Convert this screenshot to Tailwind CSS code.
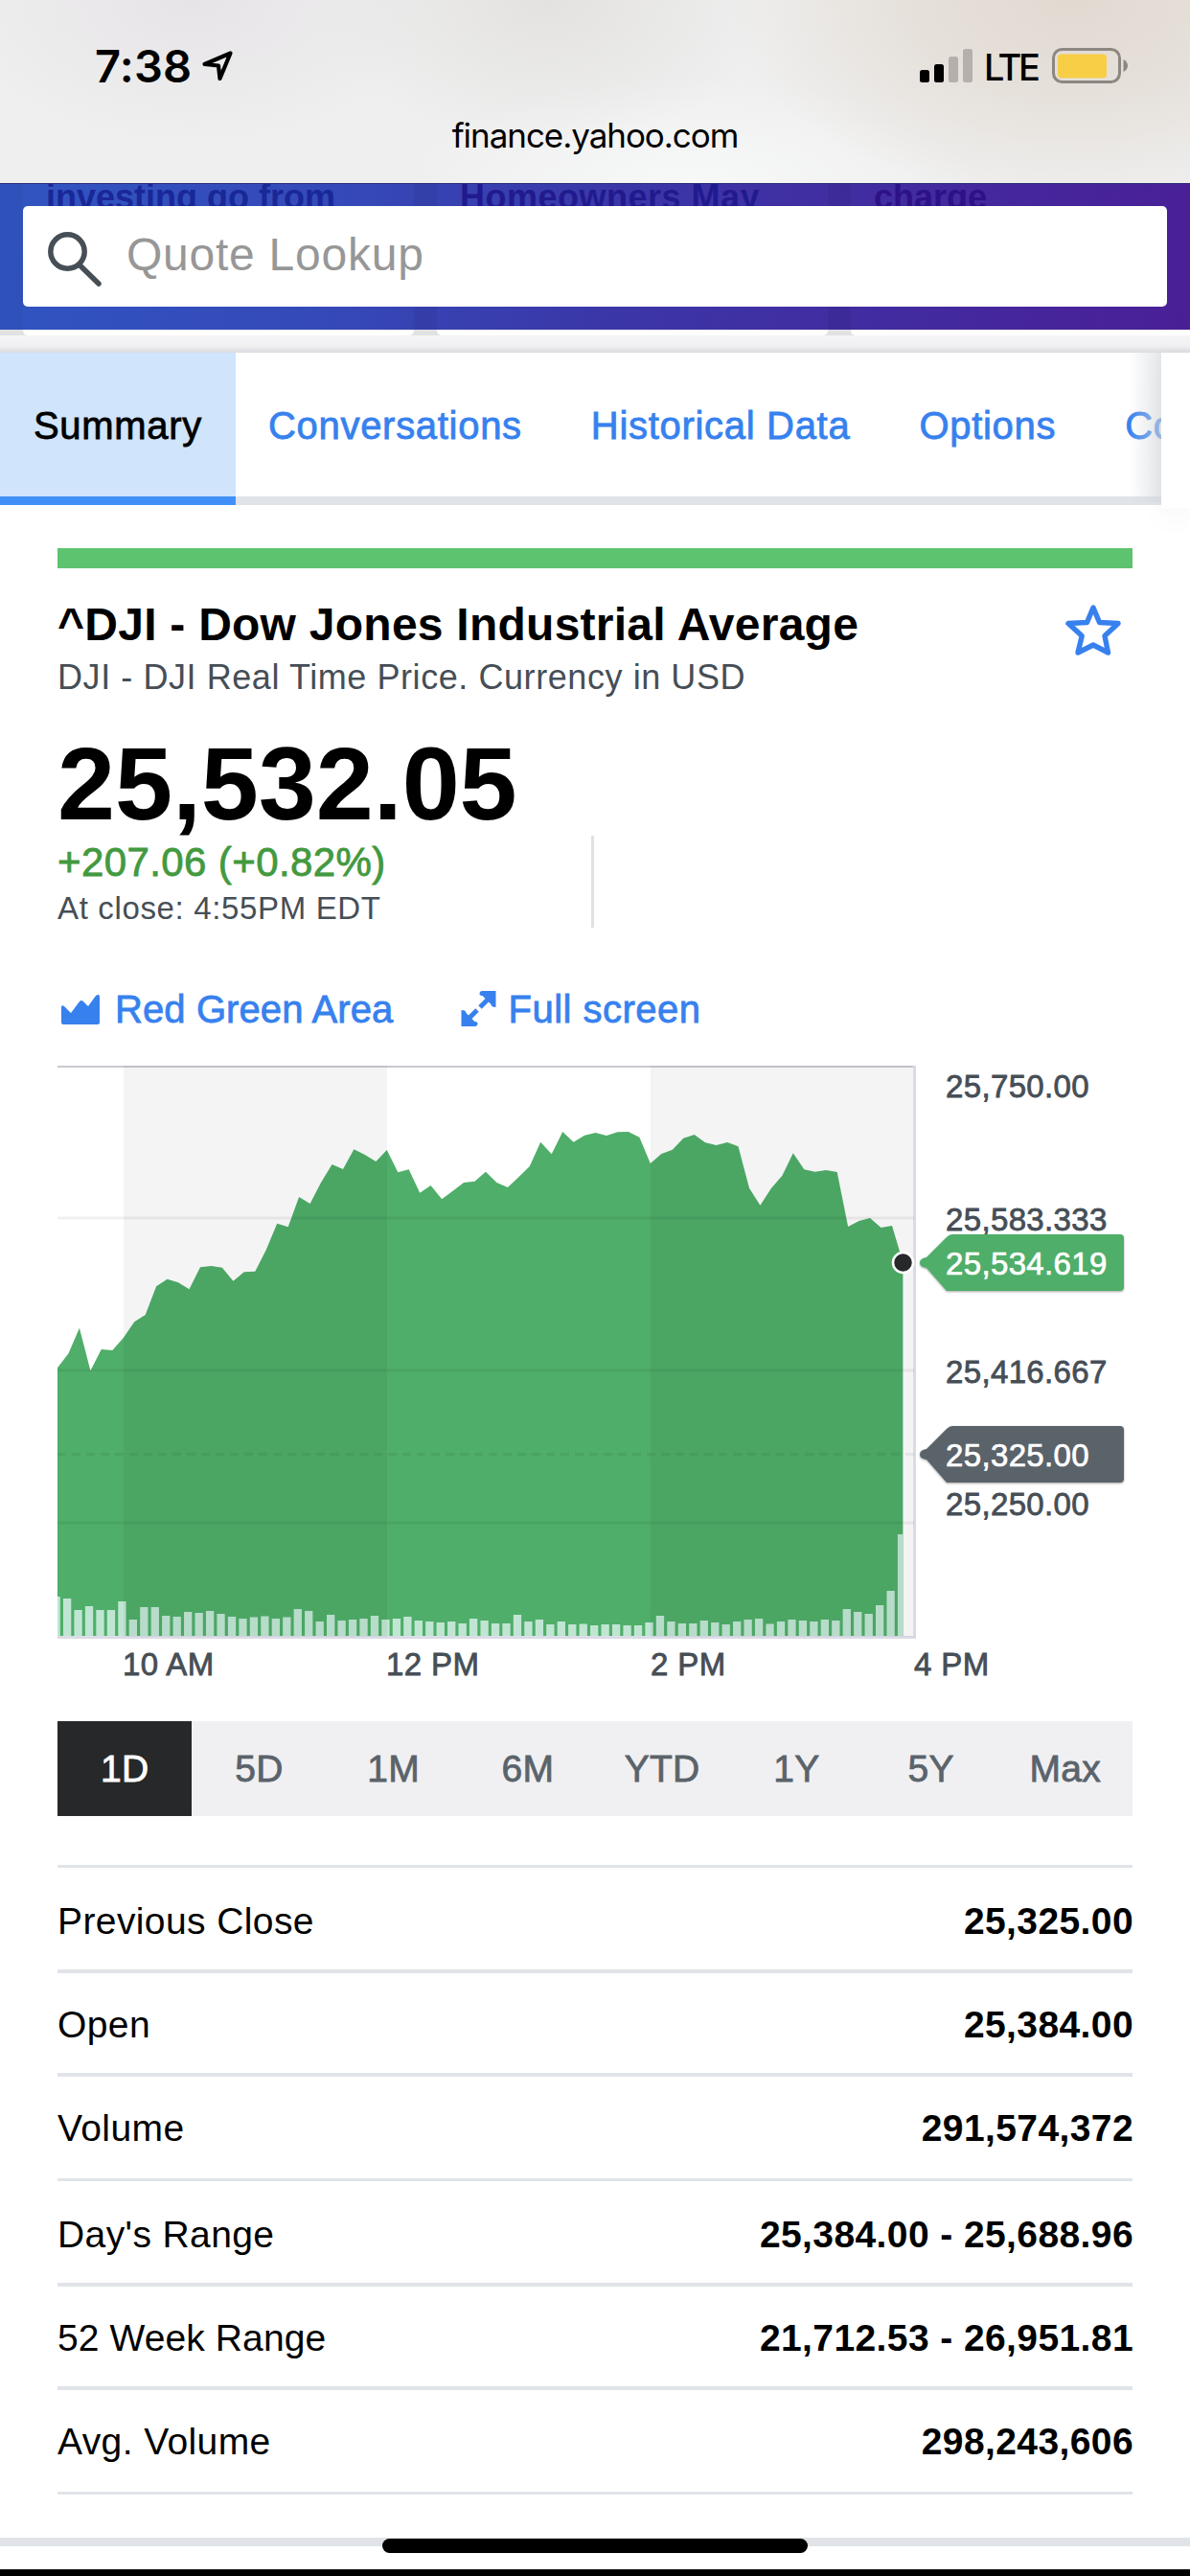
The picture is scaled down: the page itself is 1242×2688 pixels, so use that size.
<!DOCTYPE html>
<html lang="en">
<head>
  <meta charset="UTF-8">
  <title>^DJI - Dow Jones Industrial Average</title>
  <script src="https://cdn.jsdelivr.net/npm/@tailwindcss/browser@4"></script>
</head>
<body class="bg-white">
  <div class="w-[1242px] h-[2688px] flex flex-col overflow-hidden bg-white text-black font-['Liberation_Sans',Arial,sans-serif]">

    <!-- Browser status area -->
    <header class="h-[191px] shrink-0 bg-[#efefef] bg-[radial-gradient(ellipse_360px_210px_at_1120px_0px,#e2d9d1_0%,#e6e1db_50%,transparent_100%),radial-gradient(ellipse_240px_150px_at_570px_0px,#e3e2e0_0%,transparent_100%),radial-gradient(ellipse_260px_150px_at_200px_0px,#e7e4e7_0%,transparent_100%),radial-gradient(ellipse_300px_110px_at_720px_190px,#f7f8f8_0%,transparent_100%)] font-['Inter',sans-serif]">
      <div class="h-[104px] pt-[33px] pl-[99px] pr-[64px] flex items-center justify-between">
        <div class="flex items-center gap-[10px]">
          <span class="text-[47px] leading-[47px] font-semibold tracking-[0.2px]">7:38</span>
          <svg class="w-[34px] h-[34px]" viewBox="0 0 34 34" fill="none" stroke="#000" stroke-width="4.2" stroke-linejoin="round"><path d="M30.500 3.500 3.500 15 18 16.500 19.500 30Z"/></svg>
        </div>
        <div class="flex items-center">
          <svg class="w-[56px] h-[37px]" viewBox="0 0 56 37">
            <rect x="0" y="23" width="10" height="13" rx="2.500"/>
            <rect x="15" y="17" width="10" height="19" rx="2.500"/>
            <rect x="30" y="9" width="10" height="27" rx="2.500" fill="#b5b0ab"/>
            <rect x="45" y="1" width="10" height="35" rx="2.500" fill="#b5b0ab"/>
          </svg>
          <span class="ml-[11px] w-[71px] text-[38px] leading-[38px] font-medium tracking-[-3.4px] pt-[2px]">LTE</span>
          <svg class="w-[80px] h-[38px]" viewBox="0 0 80 38">
            <rect x="1.500" y="1.500" width="69" height="34" rx="9" fill="none" stroke="#8c8781" stroke-width="3"/>
            <rect x="6" y="6.500" width="51" height="25" rx="4" fill="#f7ce46"/>
            <path d="M74.500 12c6 3 6 10 0 13z" fill="#8c8781"/>
          </svg>
        </div>
      </div>
      <div class="h-[74px] flex items-center justify-center text-[35px] leading-[35px] tracking-[-1.05px]">finance.yahoo.com</div>
    </header>

    <!-- Sticky quote search over the news cards -->
    <section class="h-[153px] shrink-0 relative overflow-hidden border-t border-[#2b2d78] bg-[linear-gradient(98deg,#3055c1_0%,#3549b8_28%,#3b36a8_52%,#422ba0_75%,#4a1f96_100%)]">
      <div class="absolute inset-0 flex">
        <div class="w-6 bg-black/3"></div>
        <div class="w-[408px]"></div>
        <div class="w-6 bg-black/5"></div>
        <div class="w-[408px]"></div>
        <div class="w-6 bg-black/5"></div>
      </div>
      <div class="absolute inset-x-0 -top-[10px] flex text-[36px] leading-[48px] font-bold">
        <span class="w-[433px] pl-[48px] text-[#1a2797]">investing go from</span>
        <span class="w-[431px] pl-[47px] text-[#211a8f] tracking-[0.5px]">Homeowners May</span>
        <span class="pl-[48px] text-[#2d1186]">charge</span>
      </div>
      <div class="relative mt-[23px] mx-6 h-[105px] rounded-[5px] bg-white flex items-center">
        <svg class="ml-[25px] mt-1 w-[58px] h-[58px]" viewBox="0 0 58 58" fill="none" stroke="#464e56" stroke-width="5.500" stroke-linecap="round"><circle cx="21.500" cy="21.500" r="17.700"/><path d="M34 35.500 54 55"/></svg>
        <span class="ml-[25px] -mt-[4px] text-[48px] leading-[48px] tracking-[0.75px] text-[#979797]">Quote Lookup</span>
      </div>
    </section>
    <div class="h-[24px] shrink-0 bg-[linear-gradient(#f4f4f6_35%,#f0f0f2_70%,#dadbe0)]">
      <div class="h-[6px] bg-[#e2e2e3] pl-6 flex gap-6">
        <div class="w-[408px] bg-white rounded-b-[5px]"></div>
        <div class="w-[408px] bg-white rounded-b-[5px]"></div>
        <div class="w-[354px] bg-white rounded-bl-[5px]"></div>
      </div>
    </div>

    <!-- Section tabs -->
    <nav class="h-[159px] shrink-0 relative">
      <div class="w-[1212px] h-full overflow-hidden flex text-[40px] tracking-[0.7px] text-[#3781ee] whitespace-nowrap [-webkit-text-stroke:0.8px]">
        <a class="w-[246px] shrink-0 pt-[2px] bg-[#d0e4fc] border-b-[9px] border-[#4190f8] text-black flex items-center justify-center">Summary</a>
        <div class="grow pt-[2px] border-b-[9px] border-[#e0e4e9] flex items-center gap-[72px] pl-[34px]">
          <a>Conversations</a>
          <a>Historical Data</a>
          <a>Options</a>
          <a>Components</a>
        </div>
      </div>
      <div class="absolute right-[30px] top-0 w-[34px] h-[156px] bg-[linear-gradient(to_right,transparent,rgba(215,218,222,0.65))]"></div>
      <div class="absolute right-0 top-0 w-[30px] h-[162px] bg-white shadow-[0_10px_30px_rgba(0,0,0,0.04)]"></div>
    </nav>

    <main class="px-[60px] pt-[45px] shrink-0">
      <div class="h-[21px] bg-[#5dc36f]"></div>

      <!-- Quote -->
      <div class="flex justify-between">
        <div>
          <h1 class="mt-[31px] text-[48px] leading-[56px] font-bold tracking-[0.25px]">^DJI - Dow Jones Industrial Average</h1>
          <p class="mt-[6px] text-[36px] leading-[42px] tracking-[0.57px] text-[#464e56]">DJI - DJI Real Time Price. Currency in USD</p>
        </div>
        <svg class="mt-[36px] mr-[11px] w-[60px] h-[60px]" viewBox="0 0 60 60" fill="none" stroke="#3781ee" stroke-width="5.400" stroke-linejoin="round"><path d="M30 5 36.500 20.500 56 21.500 42 34.500 45.500 52 30 44 14 52 18.200 34.500 4 21.500 23.500 20.500Z"/></svg>
      </div>
      <p class="mt-[36px] text-[108px] leading-[108px] font-bold tracking-[-0.1px]">25,532.05</p>
      <div class="w-[560px] h-[96px] border-r-[3px] border-[#dde2e6] whitespace-nowrap">
        <p class="pt-[4px] text-[42px] leading-[48px] tracking-[0.4px] text-[#43993f] [-webkit-text-stroke:0.8px]">+207.06 (+0.82%)</p>
        <p class="mt-[4px] text-[33px] leading-[40px] tracking-[0.65px] text-[#464e56]">At close: 4:55PM EDT</p>
      </div>

      <!-- Chart tools -->
      <div class="mt-[59px] h-[50px] flex items-center text-[40px] text-[#3781ee] [-webkit-text-stroke:0.8px]">
        <svg class="ml-1 mt-[2px] w-[40px] h-[31px]" viewBox="0 0 40 31" fill="#3781ee"><path d="M0 13q0-3 3-1l7 7 9-12q2-2 4 0l5 5 8-11q4-3 4 2v26q0 2-2 2H2q-2 0-2-2z"/></svg>
        <span class="ml-[16px] mt-[2px] tracking-[0.1px]">Red Green Area</span>
        <svg class="ml-[71px] mt-[1px] w-[37px] h-[37px]" viewBox="0 0 37 37" fill="#3781ee" stroke="#3781ee"><path d="M19.500 3q0-3 3-3H36.500V17q-5 0-5-3l-9-9q-3 0-3-2z" stroke="none"/><path d="M31 6 20 17" fill="none" stroke-width="5"/><path d="M17 20 6 31" fill="none" stroke-width="5"/><path d="M17.500 34q0 3-3 3H.5V20q5 0 5 3l9 9q3 0 3 2z" stroke="none"/></svg>
        <span class="ml-[12px] mt-[2px] tracking-[0.5px]">Full screen</span>
      </div>

      <!-- Intraday chart -->
      <svg id="chart" class="block mt-[13px] -ml-[60px] w-[1242px] h-[706px]" viewBox="0 1090 1242 706" font-size="33" fill="#464e56">
        <path d="M60 1113H955" stroke="#c9c9d2" stroke-width="2"/>
        <path id="area" fill="#4fae69"/>
        <g id="bars" fill="#c0e6d3"></g>
        <path d="M60 1708.500H955" stroke="#dcdce6" stroke-width="3"/>
        <g fill="#000" fill-opacity="0.043">
          <rect x="129" y="1112" width="275" height="596"/>
          <rect x="679" y="1112" width="275" height="596"/>
        </g>
        <path d="M954.500 1112V1710" stroke="#dadae4" stroke-width="3"/>
        <path d="M60 1271H954M60 1430H954M60 1589H954" stroke="#000" stroke-opacity="0.06" stroke-width="3"/>
        <path d="M60 1517.500H954" stroke="#000" stroke-opacity="0.06" stroke-width="3" stroke-dasharray="9 6"/>
        <circle cx="942.500" cy="1317.500" r="10.500" fill="#26282a" stroke="#fff" stroke-width="2.500"/>
        <g letter-spacing="0.35" stroke="#464e56" stroke-width="0.8">
          <text x="987" y="1145">25,750.00</text>
          <text x="987" y="1284">25,583.333</text>
          <text x="987" y="1443">25,416.667</text>
          <text x="987" y="1581">25,250.00</text>
        </g>
        <g letter-spacing="0.4" stroke="#464e56" stroke-width="0.8">
          <text x="128" y="1748">10 AM</text>
          <text x="403" y="1748">12 PM</text>
          <text x="679" y="1748">2 PM</text>
          <text x="954" y="1748">4 PM</text>
        </g>
        <g class="drop-shadow-[0_1px_1px_rgba(0,0,0,0.35)]">
          <path fill="#4fae69" d="M994 1288H1169q4 0 4 4V1343q0 4-4 4H988L967 1323q-7-1-7-5.500t7-5.500L988 1291q3-3 6-3z"/>
          <path fill="#5b636a" d="M994 1488H1169q4 0 4 4V1543q0 4-4 4H988L967 1523q-7-1-7-5.500t7-5.500L988 1491q3-3 6-3z"/>
        </g>
        <g fill="#fff" letter-spacing="0.35" stroke="#fff" stroke-width="0.7">
          <text x="987" y="1330">25,534.619</text>
          <text x="987" y="1530">25,325.00</text>
        </g>
      </svg>

      <!-- Range picker -->
      <div class="h-[99px] grid grid-cols-8 bg-[#f0f0f3] text-[39px] tracking-[0.3px] text-[#5b636a] [-webkit-text-stroke:0.8px]">
        <span class="pt-[2px] flex items-center justify-center bg-[#26282a] text-white">1D</span>
        <span class="pt-[2px] flex items-center justify-center">5D</span>
        <span class="pt-[2px] flex items-center justify-center">1M</span>
        <span class="pt-[2px] flex items-center justify-center">6M</span>
        <span class="pt-[2px] flex items-center justify-center">YTD</span>
        <span class="pt-[2px] flex items-center justify-center">1Y</span>
        <span class="pt-[2px] flex items-center justify-center">5Y</span>
        <span class="pt-[2px] flex items-center justify-center">Max</span>
      </div>

      <!-- Key stats -->
      <dl class="mt-[51px] border-t-[3px] border-[#e0e4e9] text-[39px] tracking-[0.4px]">
        <div class="h-[110px] pt-[6px] border-b-[4px] border-[#e0e4e9] flex items-center justify-between"><dt>Previous Close</dt><dd class="-mr-px font-bold">25,325.00</dd></div>
        <div class="h-[108px] pt-[4px] border-b-[4px] border-[#e0e4e9] flex items-center justify-between"><dt>Open</dt><dd class="-mr-px font-bold">25,384.00</dd></div>
        <div class="h-[109px] pt-[3px] border-b-[3px] border-[#e0e4e9] flex items-center justify-between"><dt>Volume</dt><dd class="-mr-px font-bold">291,574,372</dd></div>
        <div class="h-[110px] pt-[6px] border-b-[4px] border-[#e0e4e9] flex items-center justify-between"><dt>Day's Range</dt><dd class="-mr-px font-bold">25,384.00 - 25,688.96</dd></div>
        <div class="h-[108px] pt-[4px] border-b-[4px] border-[#e0e4e9] flex items-center justify-between"><dt class="tracking-[0.1px]">52 Week Range</dt><dd class="-mr-px font-bold">21,712.53 - 26,951.81</dd></div>
        <div class="h-[109px] pt-[3px] border-b-[3px] border-[#e0e4e9] flex items-center justify-between"><dt>Avg. Volume</dt><dd class="-mr-px font-bold">298,243,606</dd></div>
      </dl>
    </main>

    <!-- Home indicator -->
    <footer class="mt-[45px] grow border-t-[9px] border-[#e0e4e9] relative flex flex-col justify-end">
      <div class="absolute left-[399px] -top-[8px] w-[444px] h-[15px] rounded-full bg-black"></div>
      <div class="h-[7px] bg-black"></div>
    </footer>
  </div>

  <script>
    // y position of each 5 minute price
    const prices = [
      1427.3, 1412.3, 1385.7, 1430.3, 1408, 1409, 1396, 1379.3, 1372, 1342.3, 1334.7, 1338.3, 1345.3, 1322.3, 1321, 1322.7,
      1336.7, 1327.3, 1326.7, 1304.3, 1276.7, 1280.3, 1249, 1256, 1234, 1215, 1220, 1199.3, 1205, 1212, 1200, 1223.3,
      1220.3, 1244.7, 1237, 1251.3, 1242.7, 1234, 1232.7, 1222.7, 1234, 1239, 1228.3, 1217, 1191.7, 1204.3, 1181, 1191.7,
      1184.7, 1182, 1185, 1181.3, 1181, 1186.7, 1214, 1204, 1199.7, 1187.7, 1184, 1192.3, 1195, 1192, 1196.3, 1239.7,
      1257.7, 1240, 1226.7, 1203.3, 1220.3, 1222.7, 1221, 1223, 1280, 1274, 1271, 1281, 1279, 1317.3
    ];
    // height of each volume bar
    const volumes = [
      41, 39, 27, 31, 27, 27, 36, 17, 30, 30, 21, 20, 25, 24, 26, 23, 20, 18, 19.5, 20.5, 18, 19.5, 28, 26, 15, 22, 16, 17,
      18, 21, 17, 18, 20, 16, 15, 14, 15, 13, 18, 16, 13, 13, 22, 15, 17, 12, 15, 12, 12.5, 11, 12, 12, 11, 11, 14, 21, 15,
      13, 13, 16, 14, 12, 15, 17, 18, 12.5, 15, 17, 16, 15, 17, 16, 28, 25, 23, 32, 47, 106
    ];
    const step = 11.46;

    const line = prices.map((y, i) => (60 + i * step).toFixed(1) + ' ' + y);
    document.getElementById('area').setAttribute('d', 'M60 1707L' + line.join('L') + 'V1707Z');

    const bars = document.getElementById('bars');
    volumes.forEach((h, i) => {
      const left = Math.max(60, 54.5 + i * step);
      const right = Math.min(942.5, 62.8 + i * step);
      const rect = document.createElementNS('http://www.w3.org/2000/svg', 'rect');
      rect.setAttribute('x', left);
      rect.setAttribute('y', 1707 - h);
      rect.setAttribute('width', right - left);
      rect.setAttribute('height', h);
      bars.appendChild(rect);
    });
  </script>
</body>
</html>
